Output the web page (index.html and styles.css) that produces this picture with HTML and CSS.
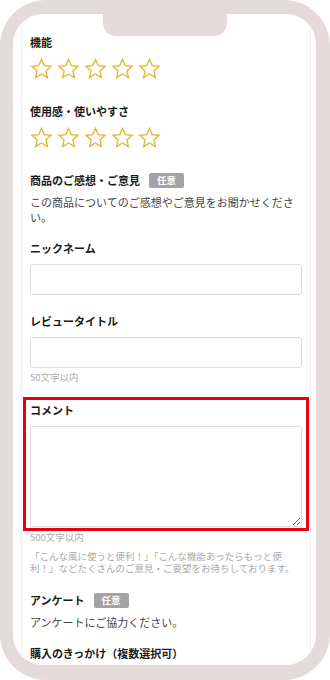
FILE: index.html
```html
<!DOCTYPE html>
<html lang="ja">
<head>
    <meta charset="utf-8">
    <title>レビュー投稿</title>
    <link rel="stylesheet" href="styles.css">
</head>
<body>
    <div class="phone">
        <div class="screen">
            <div class="notch"></div>
            <div class="card">
                <div class="group rate">
                    <div class="label">機能</div>
                    <div class="stars" data-count="5"></div>
                </div>
                <div class="group rate">
                    <div class="label">使用感・使いやすさ</div>
                    <div class="stars" data-count="5"></div>
                </div>
                <div class="group intro">
                    <div class="label">商品のご感想・ご意見<span class="badge">任意</span></div>
                    <p class="desc">この商品についてのご感想やご意見をお聞かせください。</p>
                </div>
                <div class="group">
                    <div class="label">ニックネーム</div>
                    <input type="text" class="field">
                </div>
                <div class="group short">
                    <div class="label">レビュータイトル</div>
                    <input type="text" class="field">
                    <div class="hint">50文字以内</div>
                </div>
                <div class="highlight">
                    <div class="label">コメント</div>
                    <textarea class="field area"></textarea>
                </div>
                <div class="hint">500文字以内</div>
                <p class="note">「こんな風に使うと便利！」「こんな機能あったらもっと便利！」などたくさんのご意見・ご要望をお待ちしております。</p>
                <div class="group intro">
                    <div class="label">アンケート<span class="badge">任意</span></div>
                    <p class="desc">アンケートにご協力ください。</p>
                </div>
                <div class="label">購入のきっかけ（複数選択可）</div>
            </div>
        </div>
    </div>

    <script>
        // outline stars for the rating rows
        var star = '<svg width="23" height="21" viewBox="0 0 24 22"><polygon points="12,1.5 14.9,8 22,8.7 16.6,13.5 18.2,20.5 12,16.8 5.8,20.5 7.4,13.5 2,8.7 9.1,8" fill="none" stroke="#e8b335" stroke-width="1.4" stroke-linejoin="miter"/></svg>';
        document.querySelectorAll('.stars').forEach(function (row) {
            var n = parseInt(row.dataset.count, 10);
            for (var i = 0; i < n; i++) {
                row.insertAdjacentHTML('beforeend', star);
            }
        });
    </script>
</body>
</html>
```

FILE: styles.css
```css
body {
    margin: 0;
    background-color: #fff;
    font-family: "Noto Sans CJK JP", "Noto Sans", sans-serif;
    color: #222;
}
.phone {
    width: 330px;
    height: 680px;
    box-sizing: border-box;
    padding: 14px 14px 15px 13px;
    background-color: #e3dad9;
    border-radius: 46px;
}
.screen {
    position: relative;
    height: 100%;
    background-color: #fff;
    border-radius: 30px;
    overflow: hidden;
    padding: 0 5px 0 8px;
}
.notch {
    position: absolute;
    top: 0;
    left: 90px;
    width: 124px;
    height: 22px;
    background-color: #e3dad9;
    border-radius: 0 0 13px 13px;
}
.card {
    height: 100%;
    box-sizing: border-box;
    border-left: 1px solid #eee;
    border-right: 1px solid #eee;
    padding: 20px 8px 0 8px;
}
.group {
    margin-bottom: 18px;
}
.group.rate {
    margin-bottom: 24px;
}
.group.intro {
    margin-bottom: 15px;
}
.group.short {
    margin-bottom: 14px;
}
.label {
    display: flex;
    align-items: center;
    font-size: 11px;
    font-weight: bold;
    line-height: 16px;
    color: #1a1a1a;
}
.badge {
    display: inline-block;
    margin-left: 9px;
    width: 35px;
    height: 15px;
    line-height: 15px;
    text-align: center;
    background-color: #a3a3a3;
    border-radius: 2px;
    color: #fff;
    font-size: 9.5px;
}
.stars {
    display: flex;
    gap: 4px;
    margin-top: 8px;
    height: 21px;
}
.stars svg {
    display: block;
}
.desc {
    margin: 7px 0 0 0;
    font-size: 11px;
    line-height: 15px;
    color: #444;
}
.field {
    display: block;
    box-sizing: border-box;
    width: 100%;
    height: 31px;
    margin-top: 8px;
    border: 1px solid #ddd;
    border-radius: 3px;
    background-color: #fff;
    font-family: inherit;
}
.hint {
    font-size: 9.5px;
    line-height: 12px;
    color: #aaa;
}
.group .field + .hint {
    margin-top: 3px;
}
.highlight {
    margin: 0 -7px;
    padding: 2px 4px 1px 4px;
    border: 3px solid #e60012;
}
.area {
    height: 101px;
    resize: vertical;
}
.note {
    margin: 7px 0 18px 0;
    font-size: 9.5px;
    line-height: 12px;
    color: #aaa;
}
```
